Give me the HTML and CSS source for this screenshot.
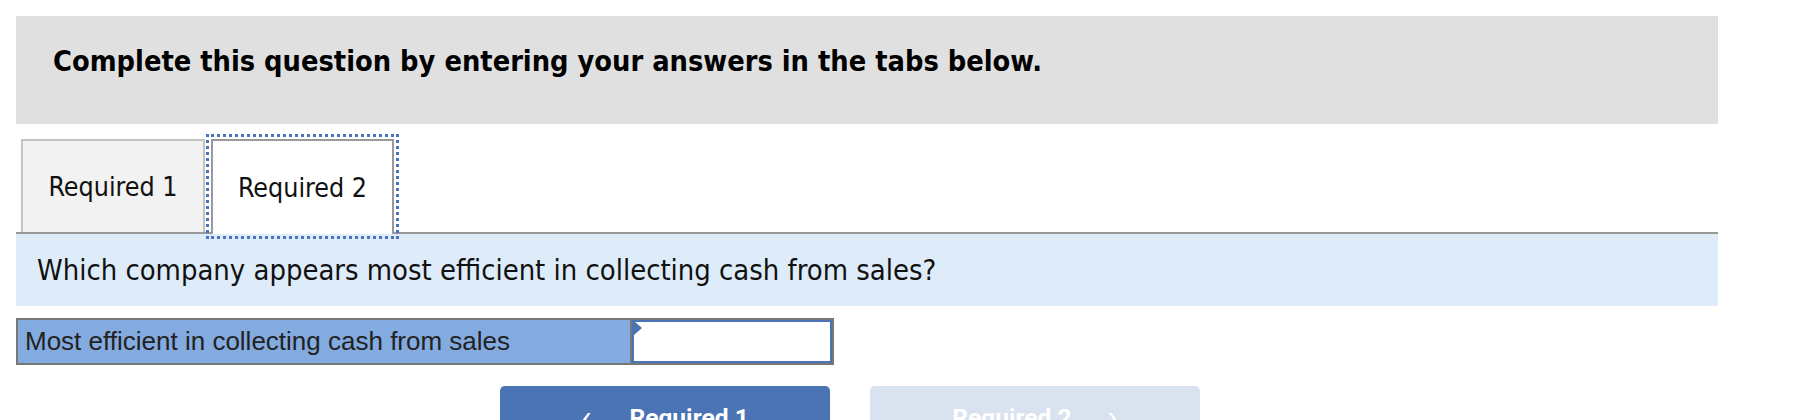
FILE: index.html
```html
<!DOCTYPE html>
<html>
<head>
<meta charset="utf-8">
<link rel="stylesheet" href="styles.css">
</head>
<body>
<div class="page">
  <div class="header">
    <h2 class="header-title">Complete this question by entering your answers in the tabs below.</h2>
  </div>
  <div class="tabs">
    <div class="tab">Required 1</div>
    <div class="tab tab-active">Required 2</div>
  </div>
  <div class="question">Which company appears most efficient in collecting cash from sales?</div>
  <div class="answer-row">
    <div class="answer-label">Most efficient in collecting cash from sales</div>
    <div class="answer-input"><span class="flag"></span></div>
  </div>
  <div class="nav">
    <button class="nav-btn nav-prev"><span class="chev">&lsaquo;</span>Required 1</button>
    <button class="nav-btn nav-next">Required 2<span class="chev chev-right">&rsaquo;</span></button>
  </div>
</div>
</body>
</html>
```
FILE: styles.css
```css
html, body {
  margin: 0;
  padding: 0;
  background: #ffffff;
}
.page {
  width: 1702px;
  margin-left: 16px;
  padding-top: 16px;
  font-family: "DejaVu Sans", Verdana, sans-serif;
}
.header {
  height: 108px;
  background: #e0e0e0;
  display: flex;
  align-items: flex-start;
}
.header-title {
  margin: 0;
  padding: 28px 0 0 37px;
  font-size: 28.7px;
  font-weight: bold;
  color: #000;
  font-stretch: condensed;
}
.tabs {
  display: flex;
  margin-top: 15px;
  padding-left: 5px;
  border-bottom: 2px solid #999999;
  height: 93px;
}
.tab {
  box-sizing: border-box;
  height: 93px;
  width: 184px;
  display: flex;
  align-items: center;
  justify-content: center;
  background: #f2f2f2;
  border: 2px solid #c4c4c4;
  border-bottom: none;
  font-size: 26.6px;
  color: #111;
  font-stretch: condensed;
}
.tab-active {
  margin-left: 6px;
  width: 183px;
  height: 95px;
  background: #fff;
  border-color: #9a9a9a;
  outline: 3px dotted #4a74c0;
  outline-offset: 2px;
  position: relative;
  z-index: 1;
}
.question {
  height: 72px;
  background: #deebf8;
  display: flex;
  align-items: center;
  padding-left: 21px;
  font-size: 28.9px;
  color: #111;
  font-stretch: condensed;
}
.answer-row {
  margin-top: 12px;
  width: 818px;
  height: 47px;
  box-sizing: border-box;
  border: 2px solid #777777;
  display: flex;
}
.answer-label {
  width: 614px;
  background: #84abe0;
  border-right: 2px solid #777777;
  display: flex;
  align-items: center;
  padding-left: 7px;
  box-sizing: border-box;
  font-family: "Liberation Sans", Arial, sans-serif;
  font-size: 26px;
  color: #222;
}
.answer-input {
  flex: 1;
  background: #fff;
  border: 2px solid #4a74b4;
  position: relative;
}
.flag {
  position: absolute;
  left: 0;
  top: -1px;
  width: 0;
  height: 0;
  border-top: 7px solid transparent;
  border-bottom: 7px solid transparent;
  border-left: 8px solid #4a74b4;
}
.nav {
  display: flex;
  gap: 40px;
  margin-top: 21px;
  padding-left: 484px;
}
.nav-btn {
  width: 330px;
  height: 62px;
  border: none;
  border-radius: 5px;
  font-family: Roboto, "Liberation Sans", sans-serif;
  font-weight: bold;
  font-size: 24.6px;
  color: #fff;
  display: flex;
  align-items: center;
  justify-content: center;
  padding: 0;
}
.nav-prev {
  background: #4a74b4;
}
.nav-next {
  background: #d9e3ef;
}
.chev {
  font-weight: normal;
  font-size: 34px;
  margin-right: 38px;
  line-height: 1;
}
.chev-right {
  margin-right: 0;
  margin-left: 36px;
}
```
